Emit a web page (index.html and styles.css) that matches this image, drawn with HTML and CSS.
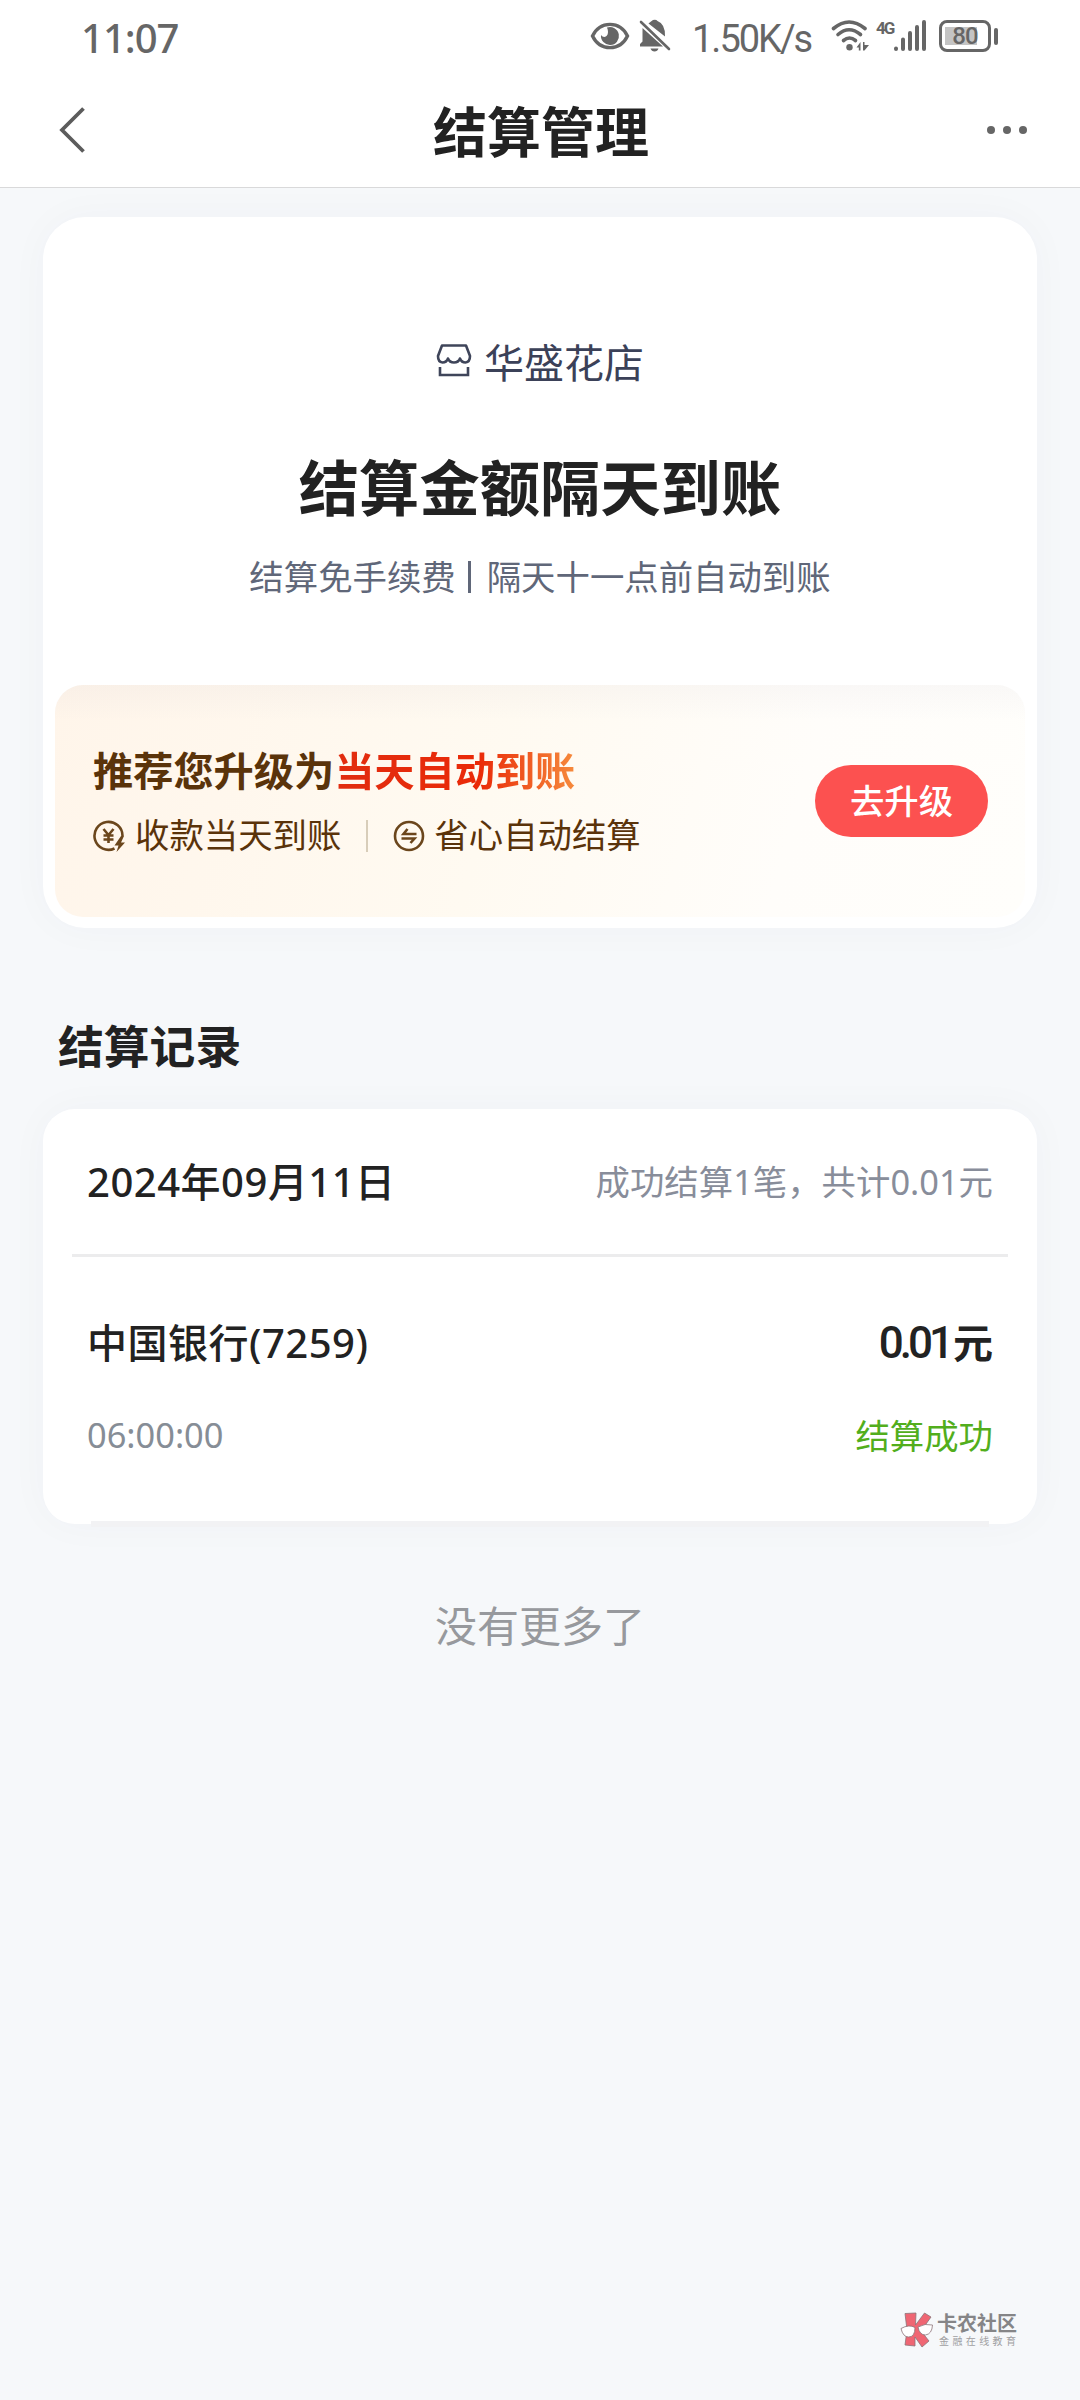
FILE: index.html
```html
<!DOCTYPE html>
<html lang="zh-CN">
<head>
    <meta charset="UTF-8">
    <meta name="viewport" content="width=device-width, initial-scale=1.0">
    <title>结算管理</title>
    <link rel="stylesheet" href="styles.css">
</head>
<body>
    <header class="header">
        <div class="status-bar">
            <span class="clock">11:07</span>
            <div class="status-icons">
                <svg class="eye" width="40" height="28" viewBox="0 0 40 28">
                    <path d="M2.5 14C10 -1.500 30 -1.500 37.500 14C30 29.500 10 29.500 2.500 14Z" fill="none" stroke="#666" stroke-width="3.4"/>
                    <path d="M17 5.500A9 9 0 1 1 11 13C14 17.500 20.500 14 17 5.500Z" fill="#666"/>
                </svg>
                <svg class="bell" width="32" height="34" viewBox="0 0 32 34">
                    <path d="M3.500 9L24 27.500H1V25L3.500 22.500ZM9.500 4.500Q11.500 2.500 14 1Q17 0 18.500 2Q26.500 5 26 17.500Z" fill="#666"/>
                    <path d="M11.500 29.500H19.500Q18.500 32.500 15.500 32.500Q12.500 32.500 11.500 29.500Z" fill="#666"/>
                    <path d="M2 3L30 30" stroke="#666" stroke-width="2.6" stroke-linecap="round"/>
                </svg>
                <span class="speed">1.50K/s</span>
                <svg class="wifi" width="40" height="34" viewBox="0 0 40 34">
                    <g fill="none" stroke="#666" stroke-width="3.6" stroke-linecap="round">
                        <path d="M2.500 9.500Q18 -3.500 34 9.500"/>
                        <path d="M7 15.500Q18 6 29.500 15.500"/>
                        <path d="M12.500 21.500Q18.500 16.500 24.500 21.500"/>
                    </g>
                    <circle cx="18.500" cy="28.200" r="3.200" fill="#666"/>
                    <path d="M29.500 23V31.500H27.800V28.500H25.500ZM32 31.500V23H33.500V26H38L33.500 31.500Z" fill="#666"/>
                </svg>
                <div class="signal">
                    <span class="net">4G</span>
                    <svg width="34" height="34" viewBox="0 0 34 34">
                        <path d="M3 29.500V30M10 20.500V30M17 14V30M24 8V30M31 3V30" stroke="#666" stroke-width="4" stroke-linecap="round"/>
                    </svg>
                </div>
                <div class="battery"><span>80</span></div>
            </div>
        </div>
        <div class="nav">
            <svg class="back" width="30" height="50" viewBox="0 0 30 50">
                <path d="M26.500 3.500L5 25L26.500 46.500" fill="none" stroke="#5c5c5c" stroke-width="3.800"/>
            </svg>
            <h1>结算管理</h1>
            <div class="more"><i></i><i></i><i></i></div>
        </div>
    </header>

    <main>
        <section class="card plan">
            <div class="shop">
                <svg width="36" height="34" viewBox="0 0 36 34">
                    <g fill="none" stroke="#3f455a" stroke-width="2.6">
                        <path d="M6 2.500H30L34 13Q34 19 29.500 19.500Q25.500 19.500 24 15.500Q22.500 19.500 18 19.500Q13.500 19.500 12 15.500Q10.500 19.500 6.500 19.500Q2 19 2 13Z" stroke-linejoin="round"/>
                        <path d="M4 24V32H32V24"/>
                    </g>
                </svg>
                <span>华盛花店</span>
            </div>
            <h2>结算金额隔天到账</h2>
            <p class="plan-desc"><span>结算免手续费</span><i></i><span>隔天十一点前自动到账</span></p>

            <div class="upgrade">
                <div class="upgrade-info">
                    <div class="upgrade-title">推荐您升级为<em>当天自动到账</em></div>
                    <div class="features">
                        <svg width="34" height="32" viewBox="0 0 34 32">
                            <g fill="none" stroke="#6b461c" stroke-width="2.600">
                                <path d="M29.500 16A14 14 0 1 0 21.500 28.500"/>
                                <path d="M10.500 9L15.500 15L20.500 9M15.500 15V23M10.500 15.500H20.500M10.500 19.500H20.500"/>
                            </g>
                            <path d="M28 16L21.500 25.500H25.500L23.500 32L32 22.500H28L31 16Z" fill="#6b461c"/>
                        </svg>
                        <span>收款当天到账</span>
                        <i></i>
                        <svg width="32" height="32" viewBox="0 0 32 32">
                            <g fill="none" stroke="#6b461c" stroke-width="2.600">
                                <circle cx="16" cy="16" r="14"/>
                                <path d="M14.500 9L10.500 14H23.500M17.500 23L21.500 18.500H8.500"/>
                            </g>
                        </svg>
                        <span>省心自动结算</span>
                    </div>
                </div>
                <button class="upgrade-btn">去升级</button>
            </div>
        </section>

        <h3>结算记录</h3>

        <section class="card records">
            <div class="day">
                <span class="date">2024年09月11日</span>
                <span class="total">成功结算1笔，共计0.01元</span>
            </div>
            <div class="record">
                <div class="row">
                    <span class="bank">中国银行(7259)</span>
                    <span class="amount"><b>0.01</b>元</span>
                </div>
                <div class="row">
                    <span class="time">06:00:00</span>
                    <span class="state">结算成功</span>
                </div>
            </div>
        </section>

        <p class="no-more">没有更多了</p>
    </main>

    <div class="watermark">
        <svg width="34" height="36" viewBox="0 0 34 36">
            <g stroke="#8b7378" stroke-width="0.800">
                <path d="M5 1.500L16 1L15.500 13L24.500 1L31 5L21 19L29 29L22 35L15 25L15 34L5 33L7 18Z" fill="#ef6673"/>
                <path d="M1 16.500Q9 12 15 15.500Q15 25 8.500 25Q3 25 1 16.500ZM18 15Q25 11 32.500 13Q32 22 25.500 23Q19.500 23 18 15Z" fill="#fff"/>
            </g>
        </svg>
        <div>
            <div class="wm-name">卡农社区</div>
            <div class="wm-sub">金融在线教育</div>
        </div>
    </div>
</body>
</html>
```
FILE: styles.css
```css
* {
    box-sizing: border-box;
    margin: 0;
    padding: 0;
}

body {
    width: 1080px;
    height: 2400px;
    position: relative;
    overflow: hidden;
    background-color: #f6f8fa;
    font-family: 'Noto Sans', 'Noto Sans CJK SC', sans-serif;
    color: #222;
}

i, em {
    font-style: normal;
}

svg {
    display: block;
    flex: none;
}

/* Header */
.header {
    height: 188px;
    background-color: #fff;
    border-bottom: 1px solid #d9d9da;
}

.status-bar {
    height: 76px;
    padding: 0 89px 0 81px;
    display: flex;
    justify-content: space-between;
    align-items: center;
    color: #666;
}

.clock {
    font-size: 40px;
    font-weight: 500;
    letter-spacing: -1px;
    line-height: 76px;
}

.status-icons {
    display: flex;
    align-items: center;
    height: 72px;
    margin-bottom: 4px;
}

.bell {
    margin-left: 9px;
}

.speed {
    width: 121px;
    margin: 5px 0 0 21px;
    font-family: Roboto, sans-serif;
    font-size: 38px;
    font-weight: 400;
    letter-spacing: -2px;
    line-height: 72px;
    white-space: nowrap;
}

.wifi {
    margin-left: 18px;
}

.signal {
    display: flex;
    margin-left: 5px;
}

.net {
    width: 17px;
    font-family: Roboto, sans-serif;
    font-size: 17px;
    font-weight: 700;
    line-height: 18px;
    letter-spacing: -2px;
}

.battery {
    width: 52px;
    height: 32px;
    margin-left: 12px;
    border: 3px solid #666;
    border-radius: 8px;
    position: relative;
    font-family: Roboto, sans-serif;
    font-size: 24px;
    font-weight: 500;
    line-height: 27px;
    letter-spacing: -1px;
    text-align: center;
    background: linear-gradient(#c4c4c4, #c4c4c4) 3px 4px / 32px 18px no-repeat;
}

.battery::after {
    content: '';
    position: absolute;
    right: -10px;
    top: 5px;
    width: 4px;
    height: 17px;
    border-radius: 2px;
    background-color: #666;
}

.nav {
    height: 111px;
    padding: 0 53px 0 57px;
    display: flex;
    align-items: center;
    justify-content: space-between;
}

.back,
.more {
    margin-bottom: 4px;
}

h1 {
    font-size: 54px;
    font-weight: 700;
    line-height: 80px;
    padding-left: 8px;
}

.more {
    display: flex;
    gap: 8px;
}

.more i {
    width: 8px;
    height: 8px;
    border-radius: 50%;
    background-color: #666;
}

/* Cards */
main {
    padding: 29px 43px 0;
}

.card {
    background-color: #fff;
    box-shadow: 0 0 40px rgba(40, 50, 100, 0.03);
}

.plan {
    height: 711px;
    padding: 114px 12px 11px;
    border-radius: 42px;
    display: flex;
    flex-direction: column;
    align-items: center;
}

.shop {
    display: flex;
    align-items: center;
    gap: 12px;
    height: 60px;
    font-size: 40px;
    color: #3b4158;
}

.shop svg {
    margin-top: -2px;
}

h2 {
    margin-top: 52px;
    font-size: 60.3px;
    font-weight: 700;
    line-height: 90px;
}

.plan-desc {
    margin-top: 19px;
    display: flex;
    align-items: center;
    font-size: 34.4px;
    line-height: 50px;
    color: #606779;
}

.plan-desc i {
    width: 3px;
    height: 32px;
    margin: 0 16px 0 12px;
    background-color: #606779;
}

/* Upgrade banner */
.upgrade {
    width: 100%;
    height: 232px;
    margin-top: auto;
    padding: 0 37px 0 38px;
    border-radius: 28px;
    display: flex;
    align-items: center;
    justify-content: space-between;
    background: linear-gradient(rgba(90, 90, 140, 0.035), rgba(90, 90, 140, 0) 36px),
        linear-gradient(105deg, #fff5ea, #fffaf1 45%, #fffdfa 75%, #fffefb);
}

.upgrade-title {
    font-size: 40.2px;
    font-weight: 700;
    line-height: 60px;
    color: #5a330a;
}

.upgrade-title em {
    background: linear-gradient(90deg, #e12d10 0%, #ea2a08 60%, #f68a3c 100%);
    -webkit-background-clip: text;
    background-clip: text;
    color: transparent;
}

.features {
    display: flex;
    align-items: center;
    height: 50px;
    margin-top: 10px;
    font-size: 34.4px;
    line-height: 50px;
    color: #5a330a;
}

.features span {
    margin: -3px 0 0 8px;
}

.features svg + span + i {
    width: 2px;
    height: 32px;
    margin: 0 25px;
    background-color: #d8cdb9;
}

.features i + svg + span {
    margin-left: 9px;
}

.upgrade-btn {
    width: 173px;
    height: 72px;
    padding-bottom: 4px;
    border: none;
    border-radius: 36px;
    background-color: #fc5150;
    color: #fff;
    font-family: inherit;
    font-size: 34.4px;
    font-weight: 500;
}

/* Settlement records */
h3 {
    margin: 83px 0 28px 15px;
    font-size: 45.8px;
    font-weight: 700;
    line-height: 70px;
}

.records {
    height: 415px;
    padding: 0 29px;
    border-radius: 32px;
    position: relative;
}

/* last divider sits on the card's bottom edge */
.records::after {
    content: '';
    position: absolute;
    left: 48px;
    right: 48px;
    bottom: -3px;
    height: 6px;
    background-color: #f2f2f4;
}

.day,
.row {
    display: flex;
    align-items: center;
    justify-content: space-between;
}

.day {
    height: 148px;
    padding: 0 15px 4px;
    border-bottom: 3px solid #ececed;
}

.date,
.bank {
    font-size: 40px;
    font-weight: 500;
    letter-spacing: 0.5px;
}

.total {
    font-size: 34.4px;
    color: #888d9a;
}

.record {
    padding: 44px 15px 0;
}

.row {
    height: 80px;
}

.row + .row {
    margin-top: 13px;
}

.amount {
    font-size: 40px;
    font-weight: 700;
}

.amount b {
    font-family: Roboto, sans-serif;
    font-size: 44px;
    font-weight: 500;
    letter-spacing: -4px;
    margin-right: 3px;
}

.time {
    font-size: 34.4px;
    color: #868d96;
}

.state {
    font-size: 34.4px;
    color: #52ae1c;
}

.no-more {
    margin-top: 72px;
    font-size: 42px;
    line-height: 60px;
    text-align: center;
    color: #97999d;
}

/* Watermark over the page */
.watermark {
    position: absolute;
    left: 900px;
    top: 2312px;
    display: flex;
    gap: 3px;
}

.wm-name {
    font-size: 20px;
    font-weight: 700;
    line-height: 23px;
    color: #858587;
    white-space: nowrap;
}

.wm-sub {
    font-size: 10px;
    line-height: 12px;
    letter-spacing: 3.4px;
    margin-left: 2px;
    color: #a0a0a2;
    white-space: nowrap;
}
```
